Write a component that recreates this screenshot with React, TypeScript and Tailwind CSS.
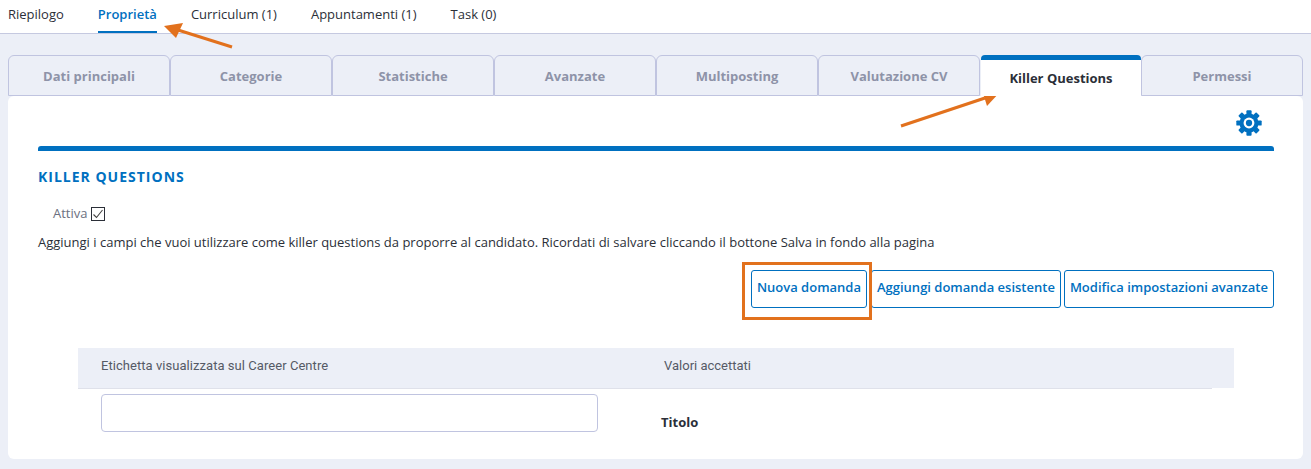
const TOP_TABS = [
  { label: "Riepilogo", active: false },
  { label: "Proprietà", active: true },
  { label: "Curriculum (1)", active: false },
  { label: "Appuntamenti (1)", active: false },
  { label: "Task (0)", active: false },
];

const TABS = [
  "Dati principali",
  "Categorie",
  "Statistiche",
  "Avanzate",
  "Multiposting",
  "Valutazione CV",
  "Killer Questions",
  "Permessi",
];

const ACTIONS = ["Nuova domanda", "Aggiungi domanda esistente", "Modifica impostazioni avanzate"];

const TEETH = [0, 45, 90, 135];

function Gear() {
  return (
    <svg viewBox="0 0 24 24" className="h-[26px] w-[26px]" fill="#0070c0">
      <circle cx="12" cy="12" r="8.800" />
      {TEETH.map((deg) => (
        <rect key={deg} x="9.600" y="0.300" width="4.800" height="23.400" rx="0.800" transform={`rotate(${deg} 12 12)`} />
      ))}
      <circle cx="12" cy="12" r="5" fill="#fff" />
      <circle cx="12" cy="12" r="2.900" />
    </svg>
  );
}

export default function App() {
  return (
    <div className="relative h-[469px] w-[1311px] overflow-hidden bg-[#eceff7] font-['Open_Sans',sans-serif] text-[13px] text-[#2b2f38]">
      {/* Top nav */}
      <div className="flex h-[34px] items-start gap-[34px] border-b border-[#c5c9e0] bg-white pl-[8px]">
        {TOP_TABS.map((t) => (
          <div
            key={t.label}
            className={`h-[33px] pt-[5px] leading-[18px] ${
              t.active ? "border-b-2 border-[#0070c0] font-semibold text-[#0070c0]" : ""
            }`}
          >
            {t.label}
          </div>
        ))}
      </div>

      <div className="px-[8px] pt-[21px]">
        {/* Tabs */}
        <div className="flex h-[41px]">
          {TABS.map((t) => {
            const active = t === "Killer Questions";
            return (
              <div
                key={t}
                className={
                  active
                    ? "z-10 ml-px flex h-[41px] w-[160px] items-center justify-center rounded-t-[4px] border-t-[5px] border-[#0070c0] bg-white pt-px font-bold text-[#2b2f38]"
                    : "flex h-[41px] w-[162px] items-center justify-center rounded-t-[6px] border border-[#c0c4e0] pt-[2px] font-bold text-[#8e93a8]"
                }
              >
                {t}
              </div>
            );
          })}
        </div>

        {/* Panel */}
        <div className="h-[363px] rounded-[6px] bg-white pl-[30px] pr-[29px]">
          <div className="flex h-[50px] justify-end pr-[12px] pt-[14px]">
            <Gear />
          </div>
          <div className="h-[5px] rounded-t-[3px] bg-[#0070c0]" />

          <h2 className="mt-[16px] text-[14px] font-bold leading-[20px] tracking-[1px] text-[#0070c0]">
            KILLER QUESTIONS
          </h2>

          <div className="mt-[18px] flex h-[18px] items-center gap-[3px] pl-[15px] text-[#6b7080]">
            <span>Attiva</span>
            <span className="flex h-[14px] w-[14px] items-center justify-center border border-[#2b2f38] bg-white">
              <svg viewBox="0 0 12 12" className="h-[12px] w-[12px]" fill="none" stroke="#444" strokeWidth="1.1">
                <path d="M1.500 6.500 4.500 9.500 10.500 2" />
              </svg>
            </span>
          </div>

          <p className="mt-[10px] leading-[18px]">
            Aggiungi i campi che vuoi utilizzare come killer questions da proporre al candidato. Ricordati di salvare
            cliccando il bottone Salva in fondo alla pagina
          </p>

          <div className="mt-[19px] flex justify-end gap-[3px]">
            {ACTIONS.map((a) => (
              <button
                key={a}
                className="h-[38px] rounded-[3px] border border-[#0070c0] bg-white px-[5px] pb-[2px] font-semibold text-[#0070c0] first:mr-px"
              >
                {a}
              </button>
            ))}
          </div>

          {/* Table */}
          <div className="mx-[40px] mt-[40px]">
            <div className="flex h-[40px] items-center bg-[#eceff7] pb-[4px] font-['Roboto',sans-serif] text-[#555a66]">
              <div className="w-[586px] pl-[23px] tracking-[0.05px]">Etichetta visualizzata sul Career Centre</div>
              <div>Valori accettati</div>
            </div>
            <div className="mr-[22px] h-px bg-[#dfe1ea]" />
            <div className="flex">
              <div className="w-[583px] pl-[23px] pt-[5px]">
                <div className="h-[38px] w-[497px] rounded-[4px] border border-[#c0c4e0] bg-white" />
              </div>
              <div className="pt-[24px] font-bold leading-[18px]">Titolo</div>
            </div>
          </div>
        </div>
      </div>

      {/* Annotations */}
      <div className="absolute left-[742px] top-[262px] h-[58px] w-[130px] border-[3px] border-[#e2711d]" />
      <svg className="pointer-events-none absolute inset-0" width="1311" height="469" fill="#e2711d">
        <line x1="232" y1="47" x2="178" y2="30" stroke="#e2711d" strokeWidth="3" />
        <polygon points="164,26 183,23 176,38" />
        <line x1="901" y1="126" x2="985" y2="98" stroke="#e2711d" strokeWidth="3" />
        <polygon points="1000,92 982,90 987,106" />
      </svg>
    </div>
  );
}
